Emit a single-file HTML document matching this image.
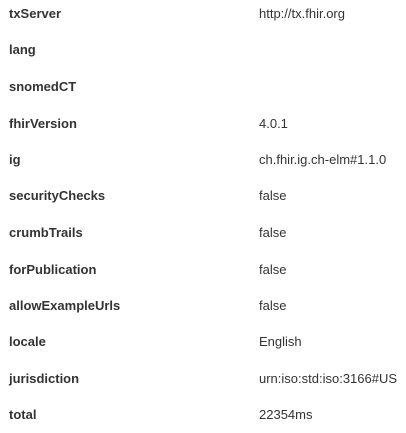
<!DOCTYPE html>
<html><head><style>
body{margin:0;background:#fff;font-family:"Liberation Sans",Arial,sans-serif;font-size:13px;color:#333;}
.r{position:absolute;left:0;width:406px;height:20px;line-height:20px;}
.k{position:absolute;left:9px;font-weight:bold;color:#333;}
.v{position:absolute;left:259px;color:#333;}
</style></head><body>
<div class="r" style="top:4px"><span class="k">txServer</span><span class="v">http://tx.fhir.org</span></div>
<div class="r" style="top:40px"><span class="k">lang</span></div>
<div class="r" style="top:77px"><span class="k">snomedCT</span></div>
<div class="r" style="top:114px"><span class="k">fhirVersion</span><span class="v">4.0.1</span></div>
<div class="r" style="top:150px"><span class="k">ig</span><span class="v">ch.fhir.ig.ch-elm#1.1.0</span></div>
<div class="r" style="top:186px"><span class="k">securityChecks</span><span class="v">false</span></div>
<div class="r" style="top:223px"><span class="k">crumbTrails</span><span class="v">false</span></div>
<div class="r" style="top:260px"><span class="k">forPublication</span><span class="v">false</span></div>
<div class="r" style="top:296px"><span class="k">allowExampleUrls</span><span class="v">false</span></div>
<div class="r" style="top:332px"><span class="k">locale</span><span class="v">English</span></div>
<div class="r" style="top:369px"><span class="k">jurisdiction</span><span class="v">urn:iso:std:iso:3166#US</span></div>
<div class="r" style="top:405px"><span class="k">total</span><span class="v">22354ms</span></div>
</body></html>
